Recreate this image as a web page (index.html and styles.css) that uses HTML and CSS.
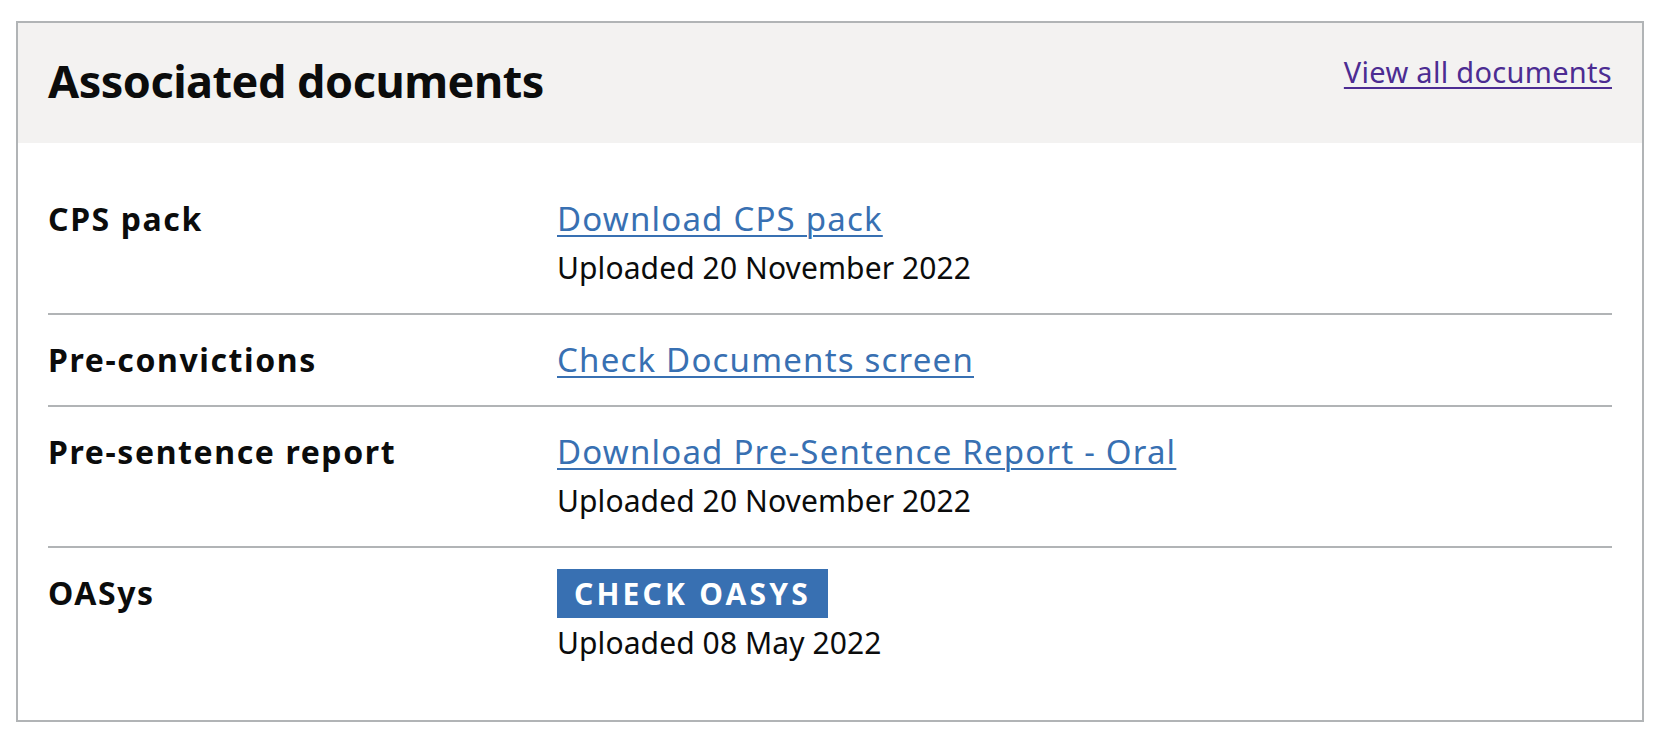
FILE: index.html
```html
<!DOCTYPE html>
<html lang="en">
<head>
<meta charset="utf-8">
<title>Associated documents</title>
<link rel="stylesheet" href="styles.css">
</head>
<body>
<section class="card">
  <header class="card-header">
    <h2 class="card-title">Associated documents</h2>
    <a class="header-link" href="#">View all documents</a>
  </header>
  <div class="card-body">
    <dl class="doc-list">
      <div class="doc-row">
        <dt class="doc-key">CPS pack</dt>
        <dd class="doc-value">
          <a class="doc-link" href="#">Download CPS pack</a>
          <p class="doc-meta">Uploaded 20 November 2022</p>
        </dd>
      </div>
      <div class="doc-row">
        <dt class="doc-key">Pre-convictions</dt>
        <dd class="doc-value">
          <a class="doc-link" href="#">Check Documents screen</a>
        </dd>
      </div>
      <div class="doc-row">
        <dt class="doc-key">Pre-sentence report</dt>
        <dd class="doc-value">
          <a class="doc-link" href="#">Download Pre-Sentence Report - Oral</a>
          <p class="doc-meta">Uploaded 20 November 2022</p>
        </dd>
      </div>
      <div class="doc-row doc-row-last">
        <dt class="doc-key">OASys</dt>
        <dd class="doc-value">
          <a class="doc-button" href="#">CHECK OASYS</a>
          <p class="doc-meta doc-meta-tight">Uploaded 08 May 2022</p>
        </dd>
      </div>
    </dl>
  </div>
</section>
</body>
</html>
```

FILE: styles.css
```css
* {
  box-sizing: border-box;
}

body {
  margin: 0;
  padding: 21px 28px 0 16px;
  background: #ffffff;
  font-family: "Noto Sans", "Liberation Sans", sans-serif;
  color: #0b0c0c;
}

.card {
  width: 1628px;
  border: 2px solid #b1b4b6;
  background: #ffffff;
}

.card-header {
  display: flex;
  justify-content: space-between;
  align-items: flex-start;
  height: 120px;
  padding: 0 30px;
  background: #f3f2f1;
}

.card-title {
  margin: 0;
  padding-top: 28px;
  font-size: 45px;
  line-height: 60px;
  font-weight: 700;
  letter-spacing: -0.5px;
}

.header-link {
  margin-top: 29px;
  font-size: 29px;
  line-height: 40px;
  letter-spacing: 0.3px;
  color: #4c2c92;
  text-decoration: underline;
  text-decoration-thickness: 2px;
  text-underline-offset: 4px;
}

.card-body {
  padding: 31px 30px 32px;
}

.doc-list {
  margin: 0;
}

.doc-row {
  display: grid;
  grid-template-columns: 509px 1fr;
  padding: 25px 0;
  border-bottom: 2px solid #b1b4b6;
}

.doc-row-last {
  border-bottom: 0;
}

.doc-key {
  margin: 0;
  font-size: 32px;
  line-height: 40px;
  font-weight: 700;
  letter-spacing: 1.6px;
}

.doc-value {
  margin: 0;
  font-size: 33px;
  line-height: 40px;
}

.doc-link {
  letter-spacing: 1.2px;
  color: #3870b2;
  text-decoration: underline;
  text-decoration-thickness: 2px;
  text-underline-offset: 4px;
}

.doc-meta {
  margin: 9px 0 0;
  font-size: 30px;
  line-height: 40px;
  letter-spacing: 0.1px;
}

.doc-meta-tight {
  margin-top: 5px;
}

.doc-button {
  display: inline-block;
  margin-top: -4px;
  padding: 0 17px;
  height: 49px;
  width: 271px;
  background: #3870b2;
  color: #ffffff;
  font-size: 30px;
  line-height: 49px;
  font-weight: 700;
  letter-spacing: 3.2px;
  text-decoration: none;
  vertical-align: top;
  white-space: nowrap;
}
```
